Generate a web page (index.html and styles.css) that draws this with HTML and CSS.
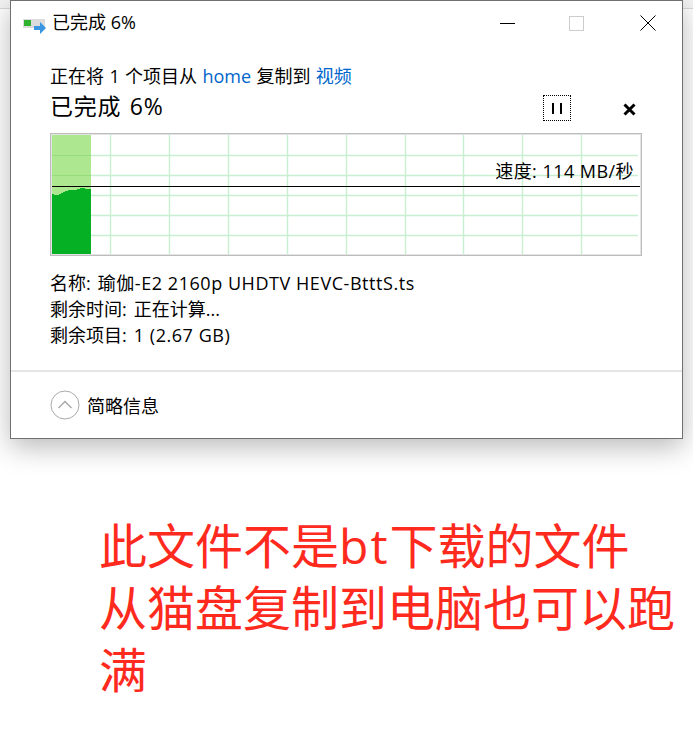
FILE: index.html
```html
<!DOCTYPE html>
<html lang="zh-CN">
<head>
    <meta charset="UTF-8">
    <title>已完成 6%</title>
    <link rel="stylesheet" href="styles.css">
</head>
<body>
    <div class="top-strip"></div>
    <div class="window">
        <div class="title-bar">
            <svg class="app-icon" width="23" height="18" viewBox="0 0 23 18">
                <rect x="0" y="2" width="22" height="9" fill="#dcdcdc"/>
                <rect x="1" y="3" width="7" height="6" fill="#2fb02f"/>
                <path d="M11 9h6V5l6 6-6 6v-4h-6z" fill="#3a96e0"/>
            </svg>
            <div class="title-text">已完成 6%</div>
            <div class="win-buttons">
                <svg width="16" height="16" viewBox="0 0 16 16"><path d="M0 8.500h15" stroke="#000"/></svg>
                <svg width="16" height="16" viewBox="0 0 16 16"><rect x=".5" y="1.500" width="14" height="14" fill="none" stroke="#ccc"/></svg>
                <svg width="16" height="16" viewBox="0 0 16 16"><path d="M.5.500l15 15M15.500.500l-15 15" stroke="#000"/></svg>
            </div>
        </div>

        <div class="content">
            <div class="copy-line">正在将 1 个项目从 <a class="link">home</a> 复制到 <a class="link">视频</a></div>
            <div class="status-row">
                <div class="percent">已完成 6%</div>
                <div class="pause-btn"><span></span><span></span></div>
                <svg class="stop-btn" width="13" height="13" viewBox="0 0 13 13"><path d="M1.500 1.500l10 10M11.500 1.500l-10 10" stroke="#000" stroke-width="3"/></svg>
            </div>

            <div class="chart">
                <svg width="588" height="119" viewBox="0 0 588 119">
                    <g stroke="#c8f0d0" stroke-width="1.400">
                        <path d="M58.500 0v119M117.500 0v119M176.500 0v119M235.500 0v119M294.500 0v119M353.500 0v119M411.500 0v119M470.500 0v119M529.500 0v119"/>
                        <path d="M0 20.500h586M0 40.500h586M0 60.500h586M0 80.500h586M0 100.500h586"/>
                    </g>
                    <rect x="0" y="0" width="39" height="119" fill="#ade790"/>
                    <path d="M0 20.500h39M0 40.500h39" stroke="#96de7c"/>
                    <path d="M0 59h2v1h5V59h2V58h2V57h2V56h3V55h9V54h3V53h5V54h6v65H0z" fill="#06b025"/>
                    <path d="M0 51.500h588" stroke="#000"/>
                </svg>
                <div class="speed">速度: 114 MB/秒</div>
            </div>

            <div class="details">
                <div><span class="label">名称:</span><span class="value">瑜伽-E2 2160p UHDTV HEVC-BtttS.ts</span></div>
                <div><span class="label">剩余时间:</span>正在计算...</div>
                <div><span class="label">剩余项目:</span><span class="value">1 (2.67 GB)</span></div>
            </div>
        </div>

        <div class="footer">
            <svg width="30" height="30" viewBox="0 0 30 30">
                <circle cx="15" cy="15" r="14" fill="none" stroke="#aaa" stroke-width="1"/>
                <path d="M8.500 18l6.500-6.500 6.500 6.500" fill="none" stroke="#aaa" stroke-width="1.500"/>
            </svg>
            <span>简略信息</span>
        </div>
    </div>

    <div class="note">此文件不是<span class="latin">bt</span>下载的文件<br>从猫盘复制到电脑也可以跑满</div>
</body>
</html>
```

FILE: styles.css
```css
html, body {
    margin: 0;
    background: #fff;
}

body {
    position: relative;
    width: 693px;
    height: 735px;
    overflow: hidden;
    font-family: "Open Sans", "Noto Sans CJK SC", sans-serif;
    color: #000;
}

.top-strip {
    position: absolute;
    top: 0;
    left: 0;
    width: 100%;
    height: 8px;
    background: #f3f3f3;
    border-bottom: 1px solid #d8d8d8;
}

.window {
    position: relative;
    box-sizing: border-box;
    width: 673px;
    height: 439px;
    margin-left: 10px;
    display: flex;
    flex-direction: column;
    background: #fff;
    border: 1px solid #707070;
    box-shadow: 0 8px 26px rgba(0, 0, 0, 0.28);
}

.title-bar {
    display: flex;
    align-items: center;
    height: 43px;
    padding-left: 12px;
    font-size: 18px;
}
.app-icon {
    margin: 6px 6px 0 0;
}
.title-text {
    flex: 1;
    line-height: 26px;
    margin-top: -2px;
}
.win-buttons {
    display: flex;
    gap: 54px;
    margin-right: 26px;
}
.win-buttons svg:nth-child(2) {
    margin: 0 1px 0 -1px;
}

.content {
    flex: 1;
    padding: 19px 39px 0 39px;
}

.copy-line {
    font-size: 18px;
    line-height: 26px;
    word-spacing: 0.7px;
}
.link {
    color: #0066cc;
}

.status-row {
    display: flex;
    align-items: center;
    height: 31px;
}
.percent {
    flex: 1;
    margin-top: 4px;
    font-size: 23px;
    line-height: 31px;
    letter-spacing: 0.7px;
    word-spacing: 2px;
}
.pause-btn {
    box-sizing: border-box;
    display: flex;
    justify-content: center;
    align-items: center;
    gap: 6px;
    width: 28px;
    height: 26px;
    margin-top: 7px;
    border: 1px dotted #000;
}
.pause-btn span {
    width: 2px;
    height: 11px;
    background: #000;
}
.stop-btn {
    margin: 10px 7px 0 52px;
}

.chart {
    position: relative;
    box-sizing: border-box;
    width: 592px;
    height: 123px;
    margin-top: 13px;
    background: #fff;
    border: 1px solid #bcbcbc;
    outline: 1px solid #e4e4e4;
    outline-offset: -2px;
    padding: 1px;
}
.chart svg {
    display: block;
}
.speed {
    position: absolute;
    top: 25px;
    right: 7px;
    font-size: 18px;
    line-height: 24px;
    letter-spacing: 0.45px;
}

.details {
    margin-top: 14px;
    font-size: 18px;
    line-height: 26px;
}
.label {
    margin-right: 7px;
}
.value {
    letter-spacing: 0.55px;
}

.footer {
    display: flex;
    align-items: center;
    gap: 7px;
    height: 66px;
    padding-left: 39px;
    border-top: 2px solid #e5e5e5;
    font-size: 18px;
}

.note {
    position: absolute;
    top: 515px;
    left: 99px;
    width: 585px;
    font-size: 48px;
    line-height: 62px;
    color: #fe2a1e;
}
.note .latin {
    letter-spacing: 2px;
}
```
